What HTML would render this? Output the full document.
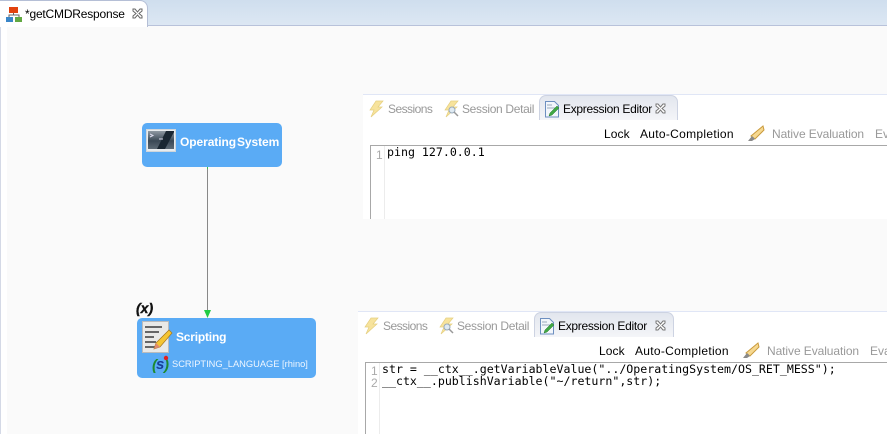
<!DOCTYPE html>
<html><head><meta charset="utf-8">
<style>
html,body{margin:0;padding:0}
body{width:887px;height:434px;overflow:hidden;position:relative;background:#fafafa;font-family:"Liberation Sans",sans-serif;font-size:12px;color:#000}
.a{position:absolute;white-space:nowrap}
.gray{color:#999}
.mono{font-family:"DejaVu Sans Mono",monospace;font-size:11.6px;line-height:13px;color:#000}
.panel{position:absolute;width:600px;background:#fff;overflow:hidden}
.ss{letter-spacing:-.55px}
.sd{letter-spacing:-.33px}
.ee{letter-spacing:-.3px}
.ac{letter-spacing:.3px}
.ne{letter-spacing:-.08px}
</style></head><body>
<!-- top tab bar -->
<div class="a" style="left:0;top:0;width:887px;height:25px;background:linear-gradient(#cfdeee,#dce7f3)"></div>
<div class="a" style="left:0;top:25px;width:887px;height:1px;background:#b8c2da"></div>
<div class="a" style="left:0;top:26px;width:7px;height:408px;background:#fff"></div>
<div class="a" style="left:0;top:26px;width:1px;height:408px;background:#d4d9e6"></div>
<div class="a" style="left:0;top:0;width:148px;height:27px;background:#fff;border-right:1px solid #b5bfd6;border-top:1px solid #b5bfd6;border-top-right-radius:8px;box-sizing:border-box"></div>
<svg class="a" style="left:6px;top:6px" width="16" height="16"><rect x="3" y="1" width="9" height="6" fill="#e2420e"/><path d="M7.5 7v2M3 11V9h10v2" stroke="#666" fill="none"/><rect x="0" y="11" width="7" height="5" fill="#3a86c8"/><rect x="9" y="11" width="7" height="5" fill="#62a842"/></svg>
<div class="a" style="left:25px;top:7px;letter-spacing:-.2px">*getCMDResponse</div>
<svg class="a" style="left:132px;top:8px" width="11" height="11"><path d="M1 1h2l2.500 3L8 1h2v2L7 5.500 10 8v2H8L5.500 7 3 10H1V8l3-2.500L1 3z" fill="#fff" stroke="#666"/></svg>

<!-- connector -->
<div class="a" style="left:207px;top:167px;width:1px;height:146px;background:#888"></div>
<div class="a" style="left:207px;top:167px;width:1px;height:2px;background:#3cc04c"></div>
<svg class="a" style="left:204px;top:310px" width="8" height="9"><path d="M0 0L7 0 3.500 8z" fill="#22cc44"/></svg>

<!-- OperatingSystem node -->
<div class="a" style="left:142px;top:123px;width:140px;height:44px;background:#5aabf5;border-radius:5px"></div>
<svg class="a" style="left:146px;top:129px" width="30" height="24"><defs><linearGradient id="g" x1="0" y1="0" x2="0" y2="1"><stop offset="0" stop-color="#8f99a3"/><stop offset=".55" stop-color="#3a4855"/><stop offset="1" stop-color="#5d6a76"/></linearGradient></defs><rect x=".5" y=".5" width="29" height="22" fill="#e8ecef" stroke="#cfd6dc"/><rect x="2" y="2" width="26" height="18" fill="url(#g)"/><path d="M20 2h8v1l-9 17h-8z" fill="#1a2733"/><path d="M4 5l3 1.500-3 1.500M13 10h4" stroke="#dde" fill="none"/></svg>
<div class="a" style="left:180px;top:135px;font-weight:bold;color:#fff;letter-spacing:-.08px">Operating<span style="margin-left:1px">System</span></div>

<!-- Scripting node -->
<div class="a" style="left:136px;top:300px;font-weight:bold;font-style:italic;font-size:14px;color:#111;-webkit-text-stroke:.4px #111">(x)</div>
<div class="a" style="left:137px;top:318px;width:179px;height:60px;background:#5aabf5;border-radius:5px"></div>
<svg class="a" style="left:142px;top:321px" width="31" height="33"><rect x=".5" y=".5" width="26" height="31" fill="#e9e9e7" stroke="#bbb"/><path d="M3 6h17M3 11h14M3 16h9M3 21h11M3 26h12" stroke="#666" stroke-width="2"/><path d="M27 9l3 3-12 14-6 2 2-6z" fill="#f5c532" stroke="#a5761c" stroke-width=".7"/><path d="M12 28l2-6 4 4z" fill="#e08a70"/></svg>
<div class="a" style="left:176px;top:330px;font-weight:bold;color:#fff;letter-spacing:-.2px">Scripting</div>
<svg class="a" style="left:152px;top:355px" width="19" height="18"><text x="0" y="15" font-family="Liberation Sans,sans-serif" font-weight="bold" font-style="italic" font-size="15" fill="#1e8a30">(</text><text x="4" y="14" font-family="Liberation Sans,sans-serif" font-weight="bold" font-style="italic" font-size="15" fill="#173f9a">s</text><text x="12" y="15" font-family="Liberation Sans,sans-serif" font-weight="bold" font-style="italic" font-size="15" fill="#1e8a30">)</text><circle cx="14" cy="3" r="2.200" fill="#e02020"/></svg>
<div class="a" style="left:172px;top:358px;font-size:9.300px;line-height:12px;color:#eef6ff">SCRIPTING_LANGUAGE [rhino]</div>

<!-- Panel 1 -->
<div class="panel" style="left:363px;top:94px;height:125px">
  <div class="a" style="left:0;top:0;width:600px;height:1px;background:#e0e6f6"></div>
  <svg class="a" style="left:5px;top:6px" width="16" height="18"><path d="M8 1h7L10 7h4L3 17l3-7H2z" fill="#f7e39c" stroke="#e5cf80" stroke-width=".7"/></svg>
  <div class="a gray ss" style="left:25px;top:8px">Sessions</div>
  <svg class="a" style="left:80px;top:6px" width="17" height="18"><path d="M8 1h7L10 7h4L3 17l3-7H2z" fill="#f7e39c" stroke="#e5cf80" stroke-width=".7"/><circle cx="9" cy="10" r="3" fill="#dfeaf2" stroke="#9ab"/><path d="M11 12l4 4" stroke="#999" stroke-width="1.500"/></svg>
  <div class="a gray sd" style="left:99px;top:8px">Session Detail</div>
  <div class="a" style="left:176px;top:1px;width:139px;height:25px;background:linear-gradient(#e2e6ee,#f4f5f8);border:1px solid #cdd3e2;border-bottom:none;border-radius:7px 7px 0 0;box-sizing:border-box"></div>
  <svg class="a" style="left:181px;top:7px" width="16" height="17"><path d="M1.500.5h9l4 4v11.500h-13z" fill="#f2f6fb" stroke="#6d8fc0"/><path d="M3 4h5M3 7h8" stroke="#9ab"/><path d="M13 5l2 2-7 7-3 1 1-3z" fill="#3fa844" stroke="#2a7a2e" stroke-width=".5"/></svg>
  <div class="a ee" style="left:200px;top:8px">Expression Editor</div>
  <svg class="a" style="left:292px;top:9px" width="11" height="11"><path d="M1 1h2l2.500 3L8 1h2v2L7 5.500 10 8v2H8L5.500 7 3 10H1V8l3-2.500L1 3z" fill="#fff" stroke="#777"/></svg>
  <div class="a" style="left:241px;top:33px;letter-spacing:.1px">Lock</div>
  <div class="a ac" style="left:277px;top:33px">Auto-Completion</div>
  <svg class="a" style="left:384px;top:31px" width="18" height="17"><path d="M16 1l1 4-9 9-4-3z" fill="#f6d890" stroke="#c99a3c"/><path d="M5 11l3 3-3 2H1z" fill="#8a8a8a"/></svg>
  <div class="a gray ne" style="left:409px;top:33px">Native Evaluation</div>
  <div class="a gray" style="left:512px;top:33px">Evaluate</div>
  <div class="a" style="left:7px;top:51px;width:600px;height:74px;box-sizing:border-box;border-top:1px solid #a8a8a8;border-left:1px solid #a8a8a8;background:#fff"></div>
  <div class="a" style="left:21px;top:52px;width:1px;height:73px;background:#ececec"></div>
  <div class="a" style="left:13px;top:54px;color:#aaa;font-size:12px">1</div>
  <div class="a mono" style="left:24px;top:52px">ping 127.0.0.1</div>
</div>

<!-- Panel 2 -->
<div class="panel" style="left:358px;top:311px;height:123px">
  <div class="a" style="left:0;top:0;width:600px;height:1px;background:#e0e6f6"></div>
  <svg class="a" style="left:5px;top:6px" width="16" height="18"><path d="M8 1h7L10 7h4L3 17l3-7H2z" fill="#f7e39c" stroke="#e5cf80" stroke-width=".7"/></svg>
  <div class="a gray ss" style="left:25px;top:8px">Sessions</div>
  <svg class="a" style="left:80px;top:6px" width="17" height="18"><path d="M8 1h7L10 7h4L3 17l3-7H2z" fill="#f7e39c" stroke="#e5cf80" stroke-width=".7"/><circle cx="9" cy="10" r="3" fill="#dfeaf2" stroke="#9ab"/><path d="M11 12l4 4" stroke="#999" stroke-width="1.500"/></svg>
  <div class="a gray sd" style="left:99px;top:8px">Session Detail</div>
  <div class="a" style="left:176px;top:1px;width:140px;height:25px;background:linear-gradient(#e2e6ee,#f4f5f8);border:1px solid #cdd3e2;border-bottom:none;border-radius:7px 7px 0 0;box-sizing:border-box"></div>
  <svg class="a" style="left:181px;top:7px" width="16" height="17"><path d="M1.500.5h9l4 4v11.500h-13z" fill="#f2f6fb" stroke="#6d8fc0"/><path d="M3 4h5M3 7h8" stroke="#9ab"/><path d="M13 5l2 2-7 7-3 1 1-3z" fill="#3fa844" stroke="#2a7a2e" stroke-width=".5"/></svg>
  <div class="a ee" style="left:200px;top:8px">Expression Editor</div>
  <svg class="a" style="left:297px;top:9px" width="11" height="11"><path d="M1 1h2l2.500 3L8 1h2v2L7 5.500 10 8v2H8L5.500 7 3 10H1V8l3-2.500L1 3z" fill="#fff" stroke="#777"/></svg>
  <div class="a" style="left:241px;top:33px;letter-spacing:.1px">Lock</div>
  <div class="a ac" style="left:277px;top:33px">Auto-Completion</div>
  <svg class="a" style="left:384px;top:31px" width="18" height="17"><path d="M16 1l1 4-9 9-4-3z" fill="#f6d890" stroke="#c99a3c"/><path d="M5 11l3 3-3 2H1z" fill="#8a8a8a"/></svg>
  <div class="a gray ne" style="left:409px;top:33px">Native Evaluation</div>
  <div class="a gray" style="left:512px;top:33px">Evaluate</div>
  <div class="a" style="left:7px;top:51px;width:600px;height:72px;box-sizing:border-box;border-top:1px solid #a8a8a8;border-left:1px solid #a8a8a8;background:#fff"></div>
  <div class="a" style="left:21px;top:52px;width:1px;height:71px;background:#ececec"></div>
  <div class="a" style="left:13px;top:54px;color:#aaa;font-size:12px;line-height:12px">1<br>2</div>
  <div class="a mono" style="left:24px;top:52px;line-height:12px">str = __ctx__.getVariableValue("../OperatingSystem/OS_RET_MESS");<br>__ctx__.publishVariable("~/return",str);</div>
</div>
</body></html>
